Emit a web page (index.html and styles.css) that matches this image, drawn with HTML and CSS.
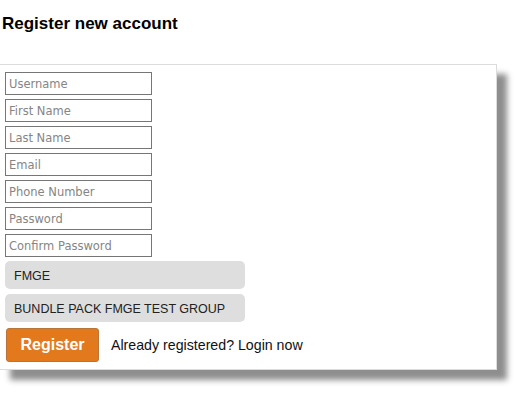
FILE: index.html
```html
<!DOCTYPE html>
<html>
<head>
<meta charset="utf-8">
<link rel="stylesheet" href="styles.css">
</head>
<body>
<h1 class="title">Register new account</h1>
<div class="card">
  <form class="form">
    <input class="field" type="text" placeholder="Username">
    <input class="field" type="text" placeholder="First Name">
    <input class="field" type="text" placeholder="Last Name">
    <input class="field" type="text" placeholder="Email">
    <input class="field" type="text" placeholder="Phone Number">
    <input class="field" type="password" placeholder="Password">
    <input class="field" type="password" placeholder="Confirm Password">
    <div class="group">FMGE</div>
    <div class="group">BUNDLE PACK FMGE TEST GROUP</div>
    <div class="actions">
      <button class="btn" type="button">Register</button>
      <span class="login">Already registered? Login now</span>
    </div>
  </form>
</div>
</body>
</html>
```
FILE: styles.css
```css
html, body {
  margin: 0;
  padding: 0;
  background: #fff;
}
body {
  padding-bottom: 33px;
}
.title {
  margin: 0;
  padding: 14px 0 0 2px;
  font-family: "Liberation Sans", Arial, sans-serif;
  font-weight: bold;
  font-size: 17px;
  line-height: 20px;
  color: #000;
}
.card {
  margin-top: 30px;
  width: 497px;
  box-sizing: border-box;
  border: 1px solid #dcdcdc;
  border-left: none;
  padding: 7px 0 7px 5px;
  box-shadow: 10px 10px 6px #8e8e8e;
  background: #fff;
}
.form {
  display: flex;
  flex-direction: column;
  align-items: flex-start;
  margin: 0;
}
.field {
  box-sizing: border-box;
  width: 147px;
  height: 23px;
  margin: 0 0 4px 0;
  padding: 0 3px;
  border: 1px solid #767676;
  font-family: "DejaVu Sans", Tahoma, sans-serif;
  font-size: 11.5px;
  color: #333;
  outline: none;
}
.field::placeholder {
  color: #858585;
}
.group {
  box-sizing: border-box;
  width: 240px;
  height: 28px;
  margin-bottom: 5px;
  padding: 1px 9px 0;
  border-radius: 5px;
  background: #dedede;
  font-family: "Liberation Sans", Arial, sans-serif;
  font-size: 12.5px;
  line-height: 28px;
  color: #222;
}
.actions {
  display: flex;
  align-items: center;
  gap: 12px;
  margin: 1px 0 0 1px;
}
.btn {
  box-sizing: border-box;
  width: 93px;
  height: 34px;
  border: 1px solid #b9743a;
  border-radius: 3px;
  background: #e2791c;
  color: #fff;
  font-family: "Liberation Sans", Arial, sans-serif;
  font-weight: bold;
  font-size: 16px;
  padding: 0;
}
.login {
  font-family: "Liberation Sans", Arial, sans-serif;
  font-size: 14.2px;
  color: #111;
}
```
